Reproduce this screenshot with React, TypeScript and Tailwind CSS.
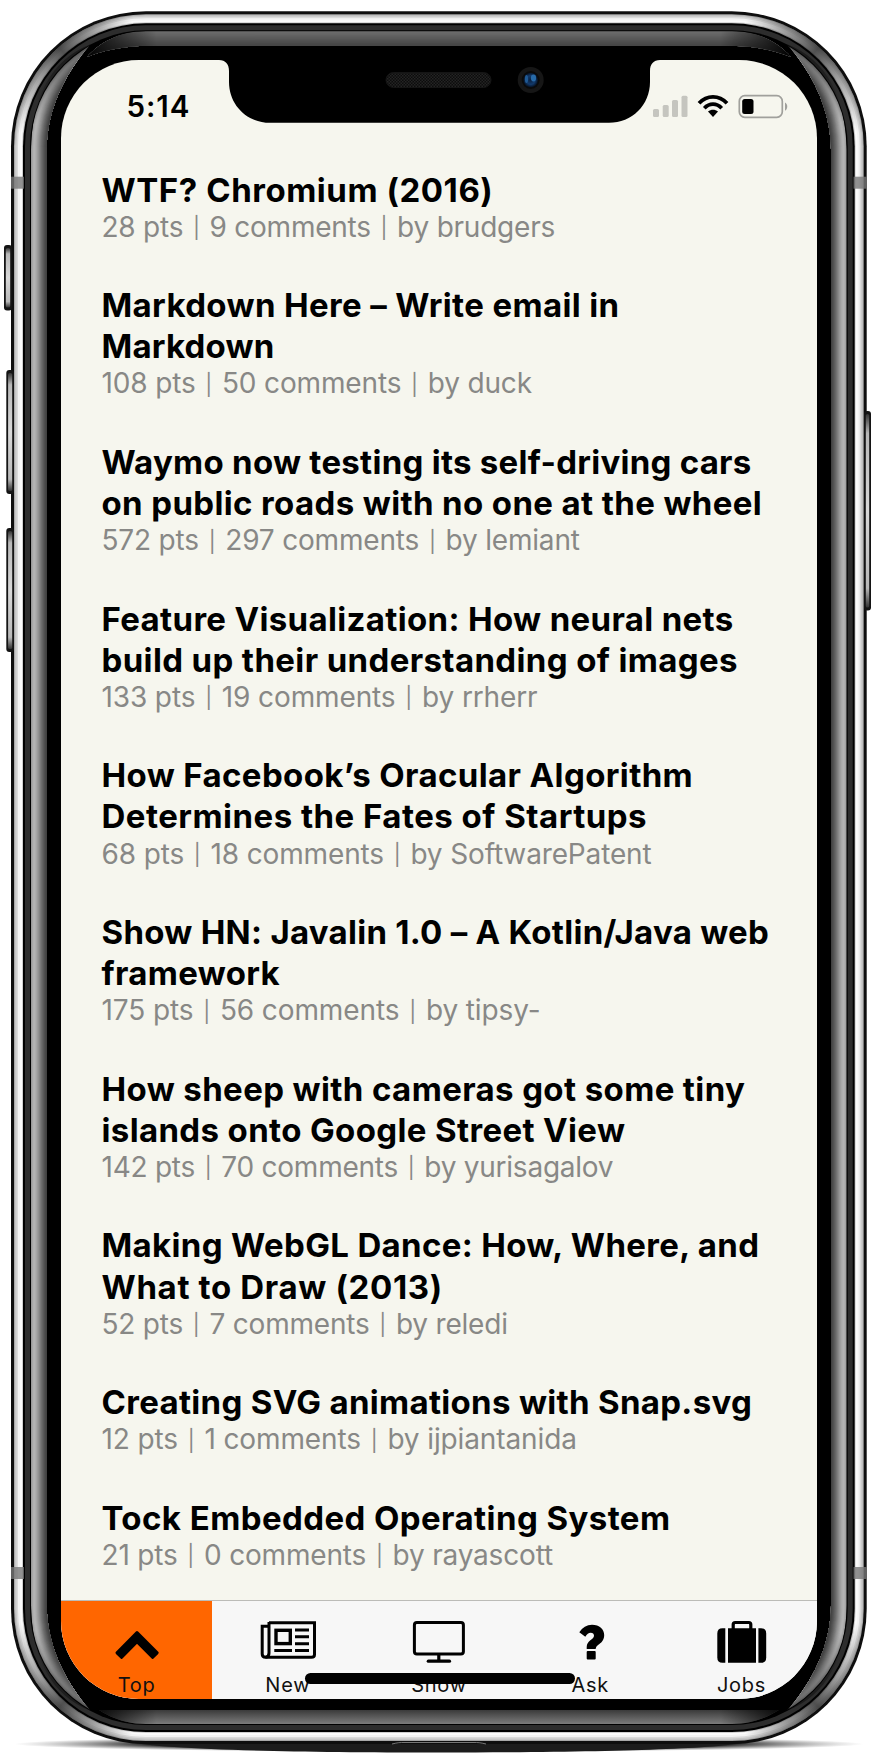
import React from "react";

type Line = { text: string; tracking: number };
type Story = { title: Line[]; meta: Line };

const stories: Story[] = [
  {
    title: [{ text: "WTF? Chromium (2016)", tracking: 0.55 }],
    meta: { text: "28 pts | 9 comments | by brudgers", tracking: -0.23 },
  },
  {
    title: [
      { text: "Markdown Here – Write email in", tracking: 0.36 },
      { text: "Markdown", tracking: 0.2 },
    ],
    meta: { text: "108 pts | 50 comments | by duck", tracking: -0.15 },
  },
  {
    title: [
      { text: "Waymo now testing its self-driving cars", tracking: 0.27 },
      { text: "on public roads with no one at the wheel", tracking: 0.37 },
    ],
    meta: { text: "572 pts | 297 comments | by lemiant", tracking: -0.18 },
  },
  {
    title: [
      { text: "Feature Visualization: How neural nets", tracking: 0.34 },
      { text: "build up their understanding of images", tracking: 0.37 },
    ],
    meta: { text: "133 pts | 19 comments | by rrherr", tracking: -0.12 },
  },
  {
    title: [
      { text: "How Facebook’s Oracular Algorithm", tracking: 0.38 },
      { text: "Determines the Fates of Startups", tracking: 0.48 },
    ],
    meta: { text: "68 pts | 18 comments | by SoftwarePatent", tracking: -0.14 },
  },
  {
    title: [
      { text: "Show HN: Javalin 1.0 – A Kotlin/Java web", tracking: 0.27 },
      { text: "framework", tracking: 0.33 },
    ],
    meta: { text: "175 pts | 56 comments | by tipsy-", tracking: -0.11 },
  },
  {
    title: [
      { text: "How sheep with cameras got some tiny", tracking: 0.38 },
      { text: "islands onto Google Street View", tracking: 0.36 },
    ],
    meta: { text: "142 pts | 70 comments | by yurisagalov", tracking: -0.24 },
  },
  {
    title: [
      { text: "Making WebGL Dance: How, Where, and", tracking: 0.34 },
      { text: "What to Draw (2013)", tracking: 0.65 },
    ],
    meta: { text: "52 pts | 7 comments | by reledi", tracking: -0.2 },
  },
  {
    title: [{ text: "Creating SVG animations with Snap.svg", tracking: 0.31 }],
    meta: { text: "12 pts | 1 comments | by ijpiantanida", tracking: -0.12 },
  },
  {
    title: [{ text: "Tock Embedded Operating System", tracking: 0.42 }],
    meta: { text: "21 pts | 0 comments | by rayascott", tracking: -0.18 },
  },
];

// One concentric layer of the phone body, measured inwards from its outer edge.
function Layer({ inset, fill }: { inset: number; fill: string }) {
  return (
    <rect
      x={11 + inset}
      y={11.3 + inset}
      width={855.7 - inset * 2}
      height={1732.7 - inset * 2}
      rx={135 - inset}
      fill={fill}
    />
  );
}

const gloss = [
  "#9a9a9a", "#a8a8a8", "#b2b2b2", "#b4b4b4", "#aeaeae", "#a6a6a6", "#9c9c9c", "#929292",
  "#868686", "#7a7a7a", "#6e6e6e", "#646464", "#5a5a5a", "#505050", "#484848", "#404040",
];
const capGloss = [
  "#6e6e6e", "#6a6a6a", "#676767", "#646464", "#616161", "#5e5e5e", "#5b5b5b", "#585858",
  "#555555", "#525252", "#4f4f4f", "#4c4c4c", "#494949", "#474747", "#444444",
];

function SideButton({ x, y, w, h }: { x: number; y: number; w: number; h: number }) {
  return (
    <g>
      <rect x={x} y={y} width={w} height={h} rx="3" fill="#141414" />
      <rect x={x + 1.8} y={y + 3} width={w - 3.6} height={h - 6} rx="1.5" fill="url(#button)" />
    </g>
  );
}

const corners = [
  "matrix(1 0 0 1 0 0)",
  "matrix(-1 0 0 1 877.7 0)",
  "matrix(1 0 0 -1 0 1755.3)",
  "matrix(-1 0 0 -1 877.7 1755.3)",
];

function PhoneBody() {
  return (
    <svg className="absolute inset-0" width="875" height="1760" viewBox="0 0 875 1760" aria-hidden="true">
      <defs>
        <linearGradient id="button" x1="0" y1="0" x2="0" y2="1">
          <stop offset="0" stopColor="#333" />
          <stop offset="0.1" stopColor="#b8b8b8" />
          <stop offset="0.5" stopColor="#d8d8d8" />
          <stop offset="0.9" stopColor="#b8b8b8" />
          <stop offset="1" stopColor="#333" />
        </linearGradient>
        <linearGradient id="corner" gradientUnits="userSpaceOnUse" x1="14" y1="125" x2="125" y2="14">
          <stop offset="0" stopColor="#444" stopOpacity="0" />
          <stop offset="0.3" stopColor="#555" stopOpacity="0.5" />
          <stop offset="0.55" stopColor="#333" stopOpacity="0.85" />
          <stop offset="0.75" stopColor="#555" stopOpacity="0.6" />
          <stop offset="1" stopColor="#444" stopOpacity="0" />
        </linearGradient>
        <linearGradient id="bladeFade" gradientUnits="userSpaceOnUse" x1="32" y1="120" x2="91" y2="44">
          <stop offset="0" stopColor="#000" stopOpacity="0" />
          <stop offset="0.5" stopColor="#000" stopOpacity="0.3" />
          <stop offset="1" stopColor="#000" stopOpacity="0.45" />
        </linearGradient>
        <linearGradient id="capFade" gradientUnits="userSpaceOnUse" x1="86" y1="0" x2="791" y2="0">
          <stop offset="0" stopColor="#000" />
          <stop offset="0.1" stopColor="#000" stopOpacity="0" />
          <stop offset="0.9" stopColor="#000" stopOpacity="0" />
          <stop offset="1" stopColor="#000" />
        </linearGradient>
        <linearGradient id="bottomGloss" x1="0" y1="0" x2="0" y2="1">
          <stop offset="0" stopColor="#3a3a3a" />
          <stop offset="1" stopColor="#7c7c7c" />
        </linearGradient>
        <radialGradient id="ground">
          <stop offset="0" stopColor="#000" />
          <stop offset="0.7" stopColor="#222" stopOpacity="0.9" />
          <stop offset="1" stopColor="#777" stopOpacity="0" />
        </radialGradient>
        <clipPath id="blades">
          <path d="M31 150C32 98 50 60 91 44C66 72 47 108 46.7 150V1605C47 1647 66 1683 91 1711C50 1695 32 1657 31 1605Z" />
          <path d="M846.7 150C845.7 98 827.7 60 786.7 44C811.7 72 830.7 108 831 150V1605C830.7 1647 811.7 1683 786.7 1711C827.7 1695 845.7 1657 846.7 1605Z" />
        </clipPath>
        <clipPath id="topCap">
          <path d="M87 57C98 44 118 31 146 31H732C760 31 780 44 791 57C770 48 745 45.5 720 45.5H158C133 45.5 108 48 87 57Z" />
        </clipPath>
        <clipPath id="bottomCap">
          <path d="M87 1700C108 1707 133 1710 158 1710H720C745 1710 770 1707 791 1700C780 1711 760 1724 732 1724H146C118 1724 98 1711 87 1700Z" />
        </clipPath>
      </defs>

      <ellipse cx="439" cy="1744" rx="425" ry="8" fill="url(#ground)" />
      <path d="M130 1742H748C720 1749 600 1752.5 439 1752.5S158 1749 130 1742Z" fill="#1c1c1c" />

      <Layer inset={0} fill="#0e0e0e" />
      <SideButton x={4} y={245} w={8} h={65.5} />
      <SideButton x={6.3} y={370} w={7.7} h={124} />
      <SideButton x={6.3} y={528} w={7.7} h={124} />
      <SideButton x={864} y={411} w={7} h={199.5} />
      <Layer inset={3} fill="#a9a9a9" />
      <Layer inset={4} fill="#c6c6c6" />
      <Layer inset={5.5} fill="#dadada" />
      <Layer inset={7} fill="#f3f3f3" />
      <Layer inset={9} fill="#fbfbfb" />
      <Layer inset={11} fill="#cfcfcf" />
      {corners.map((m) => (
        <path
          key={m}
          transform={m}
          d="M18.8 146.300A127.500 127.500 0 0 1 146.300 18.800"
          fill="none"
          stroke="url(#corner)"
          strokeWidth="9.500"
        />
      ))}
      <Layer inset={12} fill="#000" />
      <Layer inset={14} fill="#2d2d2d" />
      <Layer inset={19} fill="#000" />

      <g clipPath="url(#topCap)">
        {capGloss.map((c, i) => (
          <Layer key={i} inset={20 + i} fill={c} />
        ))}
        <rect x="80" y="30" width="718" height="28" fill="url(#capFade)" />
      </g>
      <g clipPath="url(#bottomCap)">
        <rect x="80" y="1710" width="718" height="14" fill="url(#bottomGloss)" />
        <rect x="80" y="1698" width="718" height="27" fill="url(#capFade)" />
      </g>
      <g clipPath="url(#blades)">
        {gloss.map((c, i) => (
          <Layer key={i} inset={20 + i} fill={c} />
        ))}
        {corners.map((m) => (
          <rect key={m} transform={m} x="25" y="35" width="75" height="120" fill="url(#bladeFade)" />
        ))}
      </g>

      <g fill="#777" fillOpacity="0.8">
        <rect x="11" y="176.7" width="13" height="12" />
        <rect x="853.5" y="176.7" width="13" height="12" />
        <rect x="11" y="1567" width="13" height="12" />
        <rect x="853.5" y="1567" width="13" height="12" />
      </g>
      <path d="M392 1744C398 1742.5 400 1742.5 405 1742.5H473C478 1742.5 480 1742.5 486 1744" fill="none" stroke="#777" />
    </svg>
  );
}

function Notch() {
  return (
    <svg className="absolute left-0 top-0" width="875" height="140" viewBox="0 0 875 140" aria-hidden="true">
      <defs>
        <pattern id="mesh" width="3" height="3" patternUnits="userSpaceOnUse">
          <rect width="3" height="3" fill="#0c0c0c" />
          <rect width="1.5" height="1.5" fill="#242424" />
          <rect x="1.5" y="1.5" width="1.5" height="1.5" fill="#242424" />
        </pattern>
        <radialGradient id="lens">
          <stop offset="0" stopColor="#0b1f3c" />
          <stop offset="0.6" stopColor="#123a6c" />
          <stop offset="1" stopColor="#06101f" />
        </radialGradient>
      </defs>
      <path
        d="M219 58V60C225.500 60 229 64 229 71V82C229 105 247 122.800 270 122.800H609C632 122.800 650 105 650 82V71C650 64 653.500 60 660 60V58Z"
        fill="#000"
      />
      <rect x="386" y="72.500" width="105" height="15" rx="7.500" fill="url(#mesh)" stroke="#151515" />
      <circle cx="530.700" cy="80" r="13" fill="#161616" />
      <circle cx="530.700" cy="80" r="9" fill="#0a0a0a" />
      <circle cx="530.700" cy="80" r="7.300" fill="url(#lens)" />
      <ellipse cx="533.500" cy="78" rx="2.600" ry="3.400" fill="#276aa8" />
      <ellipse cx="526.500" cy="79" rx="1.600" ry="4" fill="#205a94" />
    </svg>
  );
}

function StatusBar() {
  return (
    <div className="flex h-[109.700px] shrink-0 justify-between pl-[65.500px] pr-[28px] pt-[29px]">
      <div className="text-[29.500px] font-semibold leading-[35px] tracking-[0.900px]">5:14</div>
      <svg className="mt-[4px]" width="137" height="27" viewBox="652 93 137 27" aria-hidden="true">
        <g fill="#c5c5bf">
          <rect x="653" y="109" width="6" height="8" rx="1.500" />
          <rect x="662.700" y="105" width="6" height="12" rx="1.500" />
          <rect x="672" y="100" width="6" height="17" rx="1.500" />
          <rect x="681.500" y="95.700" width="6" height="21.300" rx="1.500" />
        </g>
        <g fill="none" stroke="#000" strokeWidth="3.800">
          <path d="M699 103.200C707 94.700 719 94.700 727 103.200" />
          <path d="M704.300 108.200C709.500 102.800 716.500 102.800 721.700 108.200" />
        </g>
        <path d="M708 111.600C711 109.200 715 109.200 718 111.600L713 117Z" />
        <rect x="739.300" y="95.700" width="43" height="21.600" rx="5.500" fill="none" stroke="#a0a09c" strokeWidth="1.700" />
        <rect x="742.200" y="99" width="11.300" height="15" rx="2.500" />
        <path d="M785 102.500C788 104 788 109 785 110.800Z" fill="#a0a09c" />
      </svg>
    </div>
  );
}

function StoryRow({ story }: { story: Story }) {
  return (
    <article>
      <h2 className="text-[33px] font-bold leading-[41.100px] text-black">
        {story.title.map((line) => (
          <span key={line.text} className="block whitespace-nowrap" style={{ letterSpacing: line.tracking }}>
            {line.text}
          </span>
        ))}
      </h2>
      <p
        className="h-[33.500px] whitespace-pre text-[28px] leading-[33.500px] text-[#888886]"
        style={{ letterSpacing: story.meta.tracking }}
      >
        {story.meta.text.split("|").map((part, i) => (
          <React.Fragment key={i}>
            {i > 0 && (
              <span className="relative -top-[1.500px] inline-block w-[11px] text-center text-[21px] leading-[21px]">|</span>
            )}
            {part}
          </React.Fragment>
        ))}
      </p>
    </article>
  );
}

const icons: Record<string, React.ReactNode> = {
  Top: (
    <svg width="60" height="50" viewBox="106.800 1617 60 50">
      <path
        d="M136.800 1632.600L157 1652.800L152.300 1657.300L136.800 1641.800L121.500 1657.300L116.800 1652.800Z"
        stroke="#000"
        strokeWidth="3"
        strokeLinejoin="round"
      />
    </svg>
  ),
  New: (
    <svg width="60" height="50" viewBox="258 1617 60 50" fill="none" stroke="#000" strokeWidth="3">
      <path d="M269 1622.700H314.500V1654.500Q314.500 1657.300 311.500 1657.300H265.500Q262.200 1657.300 262.200 1654V1626.300H269" />
      <path d="M269 1622V1653Q269 1657 265.500 1657.300" />
      <rect x="276" y="1630.300" width="14.300" height="13.300" strokeWidth="3.400" />
      <path d="M274.300 1650.500H292M295 1630H309M295 1636.800H309M295 1643.700H309M295 1650.500H309" />
    </svg>
  ),
  Show: (
    <svg width="60" height="50" viewBox="408 1617 60 50" fill="none" stroke="#000">
      <rect x="413.400" y="1622.600" width="49" height="31.500" rx="2.500" strokeWidth="3" />
      <path d="M437.800 1655V1660" strokeWidth="3.200" />
      <path d="M427.300 1661.200H448.500" strokeWidth="3.200" strokeLinecap="round" />
    </svg>
  ),
  Ask: (
    <svg width="60" height="50" viewBox="560 1617 60 50">
      <path d="M579.300 1632.300Q584 1624.700 592 1624.700C599.500 1624.700 604.200 1629 604.200 1635C604.200 1640.500 601 1643 598 1645Q595.800 1646.700 595.600 1649H586.700V1647C586.700 1640.500 594 1639.500 594 1635.800C594 1633.800 592.800 1632.700 590.700 1632.700C588.500 1632.700 587 1634 585.300 1636.800Z" />
      <rect x="586.700" y="1651" width="9" height="8.500" rx="1" />
    </svg>
  ),
  Jobs: (
    <svg width="60" height="50" viewBox="711 1617 60 50">
      <path d="M733.200 1630V1624.500Q733.200 1622.500 735.200 1622.500H748.800Q750.800 1622.500 750.800 1624.500V1630" fill="none" stroke="#000" strokeWidth="3.200" />
      <path d="M728 1628.300H756V1662.800H728Z" />
      <path d="M725.300 1628.300V1662.800H722.500Q717.300 1662.800 717.300 1657.500V1633.500Q717.300 1628.300 722.500 1628.300Z" />
      <path d="M758.400 1628.300V1662.800H761Q766.200 1662.800 766.200 1657.500V1633.500Q766.200 1628.300 761 1628.300Z" />
    </svg>
  ),
};

function TabBar() {
  return (
    <nav className="grid h-[99px] shrink-0 grid-cols-5 border-t border-[#bcbcb8] bg-[#f7f7f7]">
      {["Top", "New", "Show", "Ask", "Jobs"].map((label) => (
        <div
          key={label}
          className={"flex flex-col items-center pt-[16px] " + (label === "Top" ? "bg-[#ff6600]" : "")}
        >
          {icons[label]}
          <span className="mt-[6px] text-[20px] leading-[24px] tracking-[0.700px] text-[#111]">{label}</span>
        </div>
      ))}
    </nav>
  );
}

export default function App() {
  return (
    <div className="relative h-[1760px] w-[875px] overflow-hidden bg-white pl-[61px] pt-[60px] font-['Inter',sans-serif]">
      <PhoneBody />
      <main className="relative flex h-[1639px] w-[756px] flex-col overflow-hidden rounded-[78px] bg-[#f6f6ee] text-black">
        <StatusBar />
        <section className="flex min-h-0 flex-1 flex-col gap-[41px] overflow-hidden pl-[40.500px]">
          {stories.map((story) => (
            <StoryRow key={story.meta.text} story={story} />
          ))}
        </section>
        <TabBar />
        <div className="absolute bottom-[15.500px] left-[243.500px] h-[10.500px] w-[270px] rounded-full bg-black" />
      </main>
      <Notch />
    </div>
  );
}
